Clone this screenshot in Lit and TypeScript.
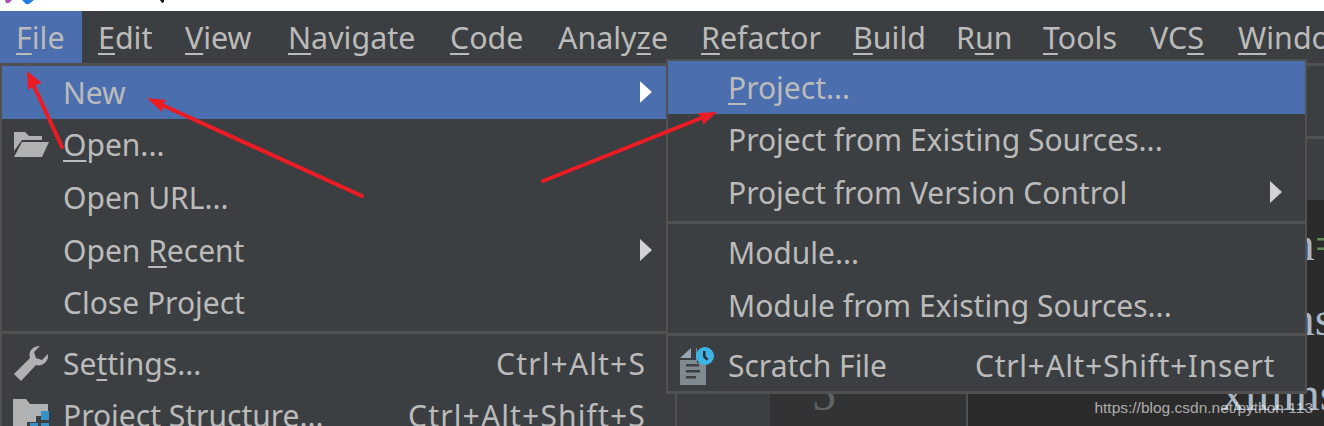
import { LitElement, html, css, svg } from 'lit';
import { customElement } from 'lit/decorators.js';

type Row = { label: string; key?: number; shortcut?: string; icon?: string; sub?: boolean; active?: boolean };

// label, mnemonic index, slot width
const topMenu: [string, number, number][] = [
  ['File', 0, 82], ['Edit', 0, 87], ['View', 0, 103], ['Navigate', 0, 162], ['Code', 0, 108], ['Analyze', 5, 143],
  ['Refactor', 0, 152], ['Build', 0, 103], ['Run', 1, 87], ['Tools', 0, 107], ['VCS', 2, 88], ['Window', 0, 120],
];

const fileGroups: Row[][] = [
  [
    { label: 'New', active: true, sub: true },
    { label: 'Open...', key: 0, icon: 'folder' },
    { label: 'Open URL...' },
    { label: 'Open Recent', key: 5, sub: true },
    { label: 'Close Project' },
  ],
  [
    { label: 'Settings...', key: 2, icon: 'wrench', shortcut: 'Ctrl+Alt+S' },
    { label: 'Project Structure...', icon: 'structure', shortcut: 'Ctrl+Alt+Shift+S' },
  ],
];

const newGroups: Row[][] = [
  [
    { label: 'Project...', key: 0, active: true },
    { label: 'Project from Existing Sources...' },
    { label: 'Project from Version Control', sub: true },
  ],
  [{ label: 'Module...' }, { label: 'Module from Existing Sources...' }],
  [{ label: 'Scratch File', icon: 'scratch', shortcut: 'Ctrl+Alt+Shift+Insert' }],
];

const icons: Record<string, unknown> = {
  folder: svg`<svg width="36" height="28" viewBox="0 0 36 28"><path d="M1 1h11l4 4h13v4H9L1 20z" fill="#afb1b3"/><path d="M9 11h27l-7 15H1z" fill="#afb1b3"/></svg>`,
  wrench: svg`<svg width="36" height="36" viewBox="0 0 36 36"><path d="M1 29 17 13c-2-6 2-12 10-12l-6 6 2 6 6 2 6-6c1 8-6 13-12 11L8 36z" fill="#afb1b3"/></svg>`,
  structure: svg`<svg width="38" height="34" viewBox="0 0 38 34"><path d="M1 0h13l4 5h18v12H24v6H15v11H1z" fill="#afb1b3"/><path d="M29 12h8v9h-8zM18 24h8v9h-8zM29 24h8v9h-8z" fill="#3592c4"/></svg>`,
  scratch: svg`<svg width="38" height="40" viewBox="0 0 38 40"><path d="M1 12 12 2v10z" fill="#9aa7b0"/><path d="M14 2h3v12H1v25h26V17h-9V2z" fill="#7f8b91"/><path d="M7 18h13v2.500H7zM7 24h14v2.500H7zM7 30h10v2.500H7z" fill="#3c3f41"/><circle cx="26" cy="10" r="9" fill="#3db3e6"/><path d="M24 5h2.500v5l3 3-2 1.500-3.500-3.500z" fill="#2b2d30"/></svg>`,
};

@customElement('app-root')
export class AppRoot extends LitElement {
  static styles = css`
    :host {
      display: block;
      position: relative;
      width: 1324px;
      height: 426px;
      overflow: hidden;
      background: #fff;
      font-family: 'Noto Sans', sans-serif;
      font-size: 30px;
      color: #bbbbbb;
    }
    u {
      text-decoration-thickness: 2px;
      text-underline-offset: 4px;
      text-decoration-skip-ink: none;
    }
    .titlebar {
      height: 11px;
      overflow: hidden;
    }
    .titlebar svg {
      display: block;
    }
    .menubar {
      display: flex;
      height: 52px;
      background: #3c3f41;
      white-space: nowrap;
      overflow: hidden;
      font-size: 30.4px;
    }
    .top-item {
      flex: none;
      box-sizing: border-box;
      padding: 1px 0 0 16px;
      line-height: 51px;
    }
    .top-item.open {
      background: #4b6eaf;
    }
    .body {
      display: flex;
      height: 363px;
    }
    .menu {
      background: #3c3f41;
      border: 2px solid #515151;
      border-top-width: 3px;
      border-bottom: none;
      flex: none;
    }
    .file-menu {
      width: 673px;
      height: 360px;
    }
    .new-menu {
      position: absolute;
      left: 666px;
      top: 59px;
      width: 637px;
      height: 330px;
      border-top-width: 2px;
      border-bottom: 3px solid #515151;
    }
    .row {
      display: flex;
      align-items: center;
      height: 52.600px;
      white-space: nowrap;
    }
    .row.active {
      background: #4b6eaf;
    }
    .slot {
      flex: none;
      width: 61px;
      display: flex;
      justify-content: center;
      padding-right: 4px;
      box-sizing: border-box;
    }
    .new-menu .slot {
      width: 60px;
      padding-right: 0;
    }
    .label {
      flex: 1;
    }
    .shortcut {
      padding-right: 29px;
      letter-spacing: 1.150px;
    }
    .new-menu .shortcut {
      padding-right: 30px;
      letter-spacing: 0.650px;
    }
    .caret {
      width: 0;
      height: 0;
      margin-right: 23px;
      border-left: 12px solid #d0d2d6;
      border-top: 11px solid transparent;
      border-bottom: 11px solid transparent;
    }
    .row.active .caret {
      border-left-color: #fff;
      filter: drop-shadow(0 0 0.6px #000);
    }
    .sep {
      height: 3px;
      background: #515151;
      margin: 2px 0 3px;
    }
    .new-menu .sep {
      margin: 1.750px 0 3px;
    }
    .ide {
      flex: 1;
      display: flex;
      flex-direction: column;
      background: #3c3f41;
    }
    .tool-head {
      height: 137px;
      flex: none;
      box-sizing: border-box;
      border-top: 3px solid #515151;
      display: flex;
      flex-direction: column;
    }
    .tool-head div {
      margin-top: 70px;
      height: 3px;
      background: #515151;
    }
    .panes {
      flex: 1;
      display: flex;
      font-family: 'Liberation Serif', serif;
      font-size: 48px;
      line-height: 75px;
    }
    .side {
      width: 93px;
      flex: none;
    }
    .gutter {
      width: 198px;
      flex: none;
      box-sizing: border-box;
      background: #313335;
      border-right: 2px solid #515151;
      color: #606366;
      padding: 156px 0 0 42px;
    }
    .editor {
      flex: 1;
      background: #2b2b2b;
      white-space: nowrap;
      overflow: hidden;
      padding: 6px 0 0 248px;
      color: #a9b7c6;
    }
    .editor span {
      color: #6a8759;
    }
    .editor .shifted {
      margin-left: 5px;
    }
    .mark {
      position: absolute;
      right: 11px;
      bottom: 9px;
      font-family: 'Liberation Sans', sans-serif;
      font-size: 15.500px;
      line-height: 18px;
      color: rgba(255, 255, 255, 0.62);
    }
    .arrows {
      position: absolute;
      inset: 0;
      pointer-events: none;
    }
  `;

  // wraps the mnemonic letter of a label in <u>
  private mnemonic(label: string, key?: number) {
    if (key === undefined) return label;
    return html`${label.slice(0, key)}<u>${label[key]}</u>${label.slice(key + 1)}`;
  }

  private renderRow(r: Row) {
    return html`<div class="row ${r.active ? 'active' : ''}">
      <span class="slot">${r.icon ? icons[r.icon] : ''}</span>
      <span class="label">${this.mnemonic(r.label, r.key)}</span>
      ${r.shortcut ? html`<span class="shortcut">${r.shortcut}</span>` : ''}
      ${r.sub ? html`<span class="caret"></span>` : ''}
    </div>`;
  }

  private renderGroups(groups: Row[][]) {
    return groups.map(
      (g, i) => html`${i > 0 ? html`<div class="sep"></div>` : ''}${g.map((r) => this.renderRow(r))}`
    );
  }

  render() {
    return html`
      <div class="titlebar">
        <svg width="200" height="11" viewBox="0 0 200 11">
          <path d="M5 0h7l-3 3H6z" fill="#b04fb5"/>
          <path d="M22 0h12l-5 4h-3z" fill="#1f7fe0"/>
          <path d="M160 0h4v2l-2 1z" fill="#111"/>
        </svg>
      </div>
      <div class="menubar">
        ${topMenu.map(
          ([label, key, width], i) =>
            html`<div class="top-item ${i === 0 ? 'open' : ''}" style="width:${width}px">${this.mnemonic(label, key)}</div>`
        )}
      </div>
      <div class="body">
        <div class="menu file-menu">${this.renderGroups(fileGroups)}</div>
        <div class="ide">
          <div class="tool-head"><div></div></div>
          <div class="panes">
            <div class="side"></div>
            <div class="gutter">5</div>
            <div class="editor">
              <div>xmln<span>=</span></div>
              <div>xmlns</div>
              <div class="shifted">xmlns</div>
            </div>
          </div>
        </div>
      </div>
      <div class="menu new-menu">${this.renderGroups(newGroups)}</div>
      <div class="mark">https://blog.csdn.net/python 113</div>
      <svg class="arrows" width="1324" height="426" viewBox="0 0 1324 426">
        <g fill="#ed1c24" stroke="#ed1c24" stroke-width="4" stroke-linecap="round">
          <path d="M62 147 33 84" fill="none"/>
          <path d="M27 71 28 90 35 85 42 83z" stroke="none"/>
          <path d="M362 196 160 104" fill="none"/>
          <path d="M147 98 162 112 163 105 166 100z" stroke="none"/>
          <path d="M543 181 704 117" fill="none"/>
          <path d="M717 112 698 113 702 118 703 125z" stroke="none"/>
        </g>
      </svg>
    `;
  }
}
